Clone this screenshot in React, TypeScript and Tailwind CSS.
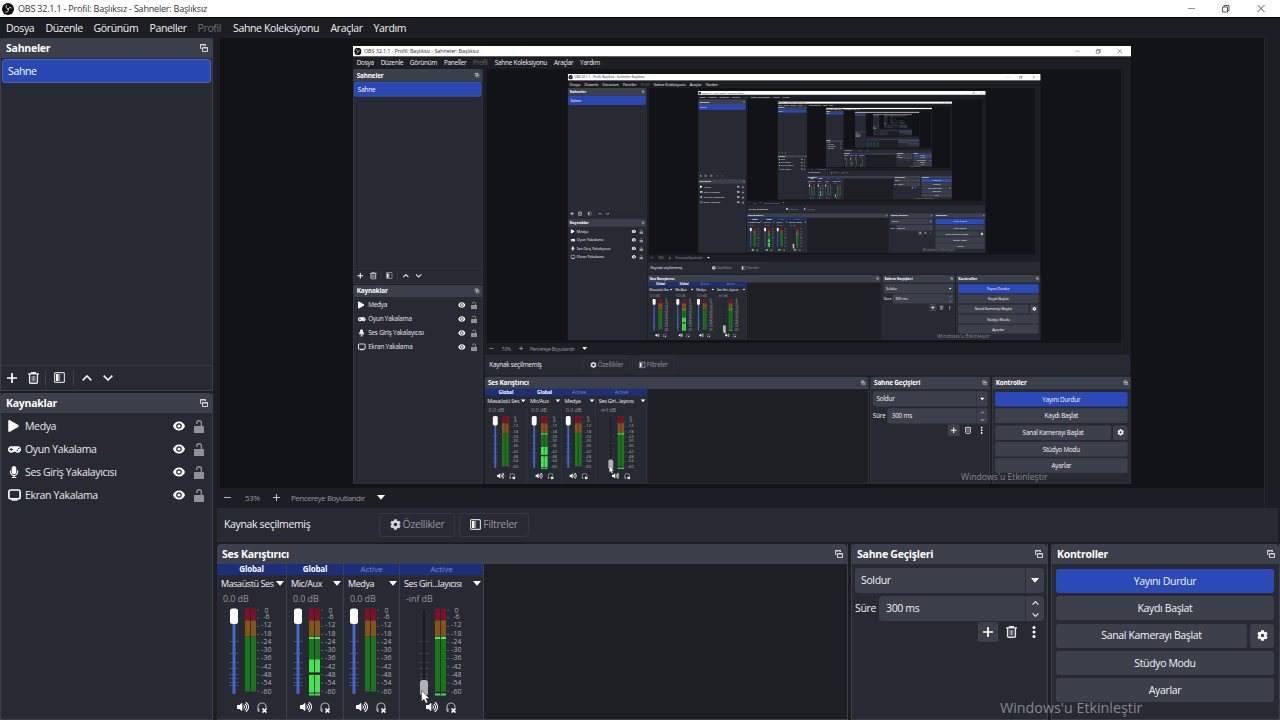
import React from 'react';
import { FaPlay, FaGamepad, FaMicrophone, FaCog, FaVolumeUp } from 'react-icons/fa';

const SCALE = 0.608;
const DETAILED_LEVELS = 5;
const MAX_DEPTH = 10;

const menuItems = [
  { label: 'Dosya', className: 'w-[39.5px]' },
  { label: 'Düzenle', className: 'w-12' },
  { label: 'Görünüm', className: 'w-14' },
  { label: 'Paneller', className: 'w-12' },
  { label: 'Profil', className: 'w-[35.5px] text-[#6b6e76]' },
  { label: 'Sahne Koleksiyonu', className: 'w-[97.5px]' },
  { label: 'Araçlar', className: 'w-[43px]' },
  { label: 'Yardım', className: 'w-10' },
];

const sources = [
  { name: 'Medya', icon: <FaPlay className="w-[11px] h-3" /> },
  { name: 'Oyun Yakalama', icon: <FaGamepad className="w-[13px] h-[11px]" /> },
  { name: 'Ses Giriş Yakalayıcısı', icon: <FaMicrophone className="w-3 h-3" /> },
  { name: 'Ekran Yakalama', icon: <ScreenIcon /> },
];

interface Channel {
  name: string;
  tag: string;
  db: string;
  width: string;
  faderPad: string;
  buttonPad: string;
  level?: 'live' | 'peak';
  muted?: boolean;
}

const channels: Channel[] = [
  { name: 'Masaüstü Ses', tag: 'Global', db: '0.0 dB', width: 'w-[70px]', faderPad: 'pl-[11px]', buttonPad: 'pl-5' },
  { name: 'Mic/Aux', tag: 'Global', db: '0.0 dB', width: 'w-[57px]', faderPad: 'pl-[5px]', buttonPad: 'pl-[13px]', level: 'live' },
  { name: 'Medya', tag: 'Active', db: '0.0 dB', width: 'w-14', faderPad: 'pl-1', buttonPad: 'pl-3' },
  { name: 'Ses Giri...layıcısı', tag: 'Active', db: '-inf dB', width: 'w-[84px]', faderPad: 'pl-[18px]', buttonPad: 'pl-[26px]', level: 'peak', muted: true },
];

const ticks = ['0', '-6', '-12', '-18', '-24', '-30', '-36', '-42', '-48', '-54', '-60'];

function ObsLogo() {
  return (
    <svg viewBox="0 0 24 24" className="w-3 h-3 shrink-0">
      <circle cx="12" cy="12" r="12" fill="#111" />
      <g fill="none" stroke="#ddd" strokeWidth="2">
        <path d="M9 4c-2 4 0 8 4 8" />
        <path d="M19 10c-4-2-7 0-7 4" />
        <path d="M7 18c4 1 7-2 5-6" />
      </g>
    </svg>
  );
}

function ScreenIcon() {
  return (
    <svg viewBox="0 0 13 12" className="w-[13px] h-3" fill="none" stroke="currentColor" strokeWidth="1.6">
      <rect x=".9" y="1" width="11.2" height="8.8" rx="1.8" />
      <path d="M3.5 11h6" strokeWidth="1.4" />
    </svg>
  );
}

function PopOutIcon() {
  return (
    <svg viewBox="0 0 8 8" className="w-2 h-2 shrink-0" fill="none" stroke="#d4d6dc">
      <path d="M1.5 4.5h-1v-4h5V2" />
      <path d="M.5 1h5" />
      <path d="M2.5 3.500h5v4h-5zM2.500 4h5" />
    </svg>
  );
}

function PlusIcon() {
  return (
    <svg viewBox="0 0 10 10" className="w-2.5 h-2.5" stroke="#fff" strokeWidth="1.7">
      <path d="M5 0v10M0 5h10" />
    </svg>
  );
}

function TrashIcon() {
  return (
    <svg viewBox="0 0 11 12" className="w-[11px] h-3" fill="none" stroke="#e6e7ea" strokeWidth="1.4">
      <path d="M0 1.9h11M3.6 1.4V.6h3.8v.8M1.6 2v8.2c0 .7.4 1.1 1.1 1.1h5.6c.7 0 1.1-.4 1.1-1.1V2" />
      <path d="M4.1 4v5.4M5.5 4v5.4M6.9 4v5.4" strokeWidth=".9" stroke="#b5b7bd" />
    </svg>
  );
}

function FilterIcon() {
  return (
    <svg viewBox="0 0 11 11" className="w-[11px] h-[11px] shrink-0" fill="none">
      <rect x=".6" y=".6" width="9.8" height="9.8" rx="1" stroke="#cfd1d6" strokeWidth="1.2" />
      <path d="M2 2h2.6v7H2z" fill="#fff" />
      <path d="M4.6 2h1.6v7H4.6z" fill="#8a8c93" />
    </svg>
  );
}

function Chevron({ up, className = 'w-2.5 h-1.5' }: { up?: boolean; className?: string }) {
  return (
    <svg viewBox="0 0 10 6" className={className} fill="none" stroke="#f0f1f3" strokeWidth="1.7">
      <path d={up ? 'M.7 5.3 5 1l4.3 4.3' : 'M.7.7 5 5 9.3.7'} />
    </svg>
  );
}

function Caret() {
  return (
    <svg viewBox="0 0 8 5" className="w-2 h-[5px] shrink-0" fill="#fff">
      <path d="M0 0h8L4 4.8z" />
    </svg>
  );
}

function EyeIcon() {
  return (
    <svg viewBox="0 0 12 10" className="w-3 h-2.5">
      <path d="M6 .4C3.2.4 1 2.2 0 5c1 2.8 3.2 4.6 6 4.6S11 7.8 12 5C11 2.2 8.8.4 6 .4z" fill="#fff" />
      <circle cx="6" cy="5" r="2.8" fill="#272a33" />
      <circle cx="6" cy="5" r="1.6" fill="#fff" />
    </svg>
  );
}

function LockIcon() {
  return (
    <svg viewBox="0 0 10 13" className="w-2.5 h-[13px]">
      <path d="M2.8 4V3a2.3 2.3 0 0 1 4.6 0v3.5" fill="none" stroke="#919193" strokeWidth="1.4" />
      <rect y="6" width="10" height="7" rx=".6" fill="#919193" />
    </svg>
  );
}

function MonitorOffIcon() {
  return (
    <svg viewBox="0 0 11 11" className="w-[11px] h-[11px]" fill="none">
      <path d="M1 9V5a4 4 0 0 1 8 0v1" stroke="#a9abb1" strokeWidth="1.2" />
      <path d="M1 6.5h1.5V10H1z" fill="#a9abb1" />
      <path d="m5.5 6.5 4 4m0-4-4 4" stroke="#fff" strokeWidth="1.7" />
    </svg>
  );
}

function DockHeader({ title }: { title: string }) {
  return (
    <div className="h-5 shrink-0 bg-[#3c404b] flex items-center justify-between pl-[5px] pr-1 rounded-t-sm">
      <span className="font-bold text-[10.5px] tracking-[-0.25px] text-white">{title}</span>
      <PopOutIcon />
    </div>
  );
}

function ScenesDock() {
  return (
    <section className="h-[353px] flex flex-col bg-[#272a33] border-x border-b border-[#3c404b]">
      <DockHeader title="Sahneler" />
      <div className="flex-1 pt-px px-px">
        <div className="h-6 bg-[#2a48b4] border border-[#4b61bd] rounded-[3px] flex items-center pl-[5px] text-white">Sahne</div>
      </div>
      <div className="h-[25px] pb-px shrink-0 border-t border-[#343741] flex items-center">
        <div className="w-[45px] h-4 flex items-center gap-[11px] pl-1.5 border-r border-[#3c404b]">
          <PlusIcon />
          <TrashIcon />
        </div>
        <div className="w-[28px] h-4 flex items-center justify-center border-r border-[#3c404b]">
          <FilterIcon />
        </div>
        <div className="flex items-center gap-[11px] pl-2">
          <Chevron up />
          <Chevron />
        </div>
      </div>
    </section>
  );
}

function SourcesDock() {
  return (
    <section className="flex-1 mt-0.5 flex flex-col bg-[#272a33] border-x border-b border-[#3c404b]">
      <DockHeader title="Kaynaklar" />
      <div className="pt-[1.5px]">
        {sources.map(source => (
          <div key={source.name} className="h-[23px] flex items-center pl-[7px] pr-2 text-[#e8e9ec]">
            <span className="w-[17px] flex items-center text-white">{source.icon}</span>
            <span className="flex-1">{source.name}</span>
            <EyeIcon />
            <span className="w-[9px]" />
            <LockIcon />
          </div>
        ))}
      </div>
    </section>
  );
}

function VolumeSlider({ muted }: { muted?: boolean }) {
  return (
    <svg viewBox="0 0 12 90" className="w-3 h-[90px] shrink-0">
      <g stroke={muted ? '#454850' : '#42507f'}>
        {[34, 46, 55, 61, 67, 71, 75, 78].map(y => (
          <path key={y} d={`M1.5 ${y}.5h9`} strokeDasharray={muted ? '3 3' : undefined} />
        ))}
      </g>
      <path d="M6 3v84" stroke={muted ? '#15171c' : '#4566cc'} strokeWidth={muted ? 1.5 : 3} />
      <rect x="2" y={muted ? 73 : 1.5} width="8" height="15.5" rx="2.5" fill={muted ? '#b0b0b3' : '#fff'} />
    </svg>
  );
}

function Meter({ level }: { level?: 'live' | 'peak' }) {
  return (
    <svg viewBox="0 0 14 90" className="w-3.5 h-[90px] shrink-0">
      <rect y="1.5" width="11" height="12" fill="#7d1128" />
      <rect y="13.5" width="11" height="16" fill="#85541a" />
      <rect y="29.5" width="11" height="55" fill="#1c7320" />
      {level && <rect y="30" width="11" height="2" fill="#52e45c" />}
      {level === 'live' && <rect y="52.5" width="11" height="33" fill="#42e550" />}
      {level === 'live' && <rect y="65.5" width="11" height="2.2" fill="#111" />}
      {level && <rect y="86.5" width="11" height="2" fill="#42df4f" />}
      <path d="M5.5 2v86" stroke="#20242b" strokeWidth=".8" />
      {ticks.map((t, i) => (
        <path key={t} d={`M12 ${3 + i * 8.1}h2`} stroke="#6f727a" strokeWidth=".8" />
      ))}
    </svg>
  );
}

function ChannelStrip({ channel }: { channel: Channel }) {
  const isGlobal = channel.tag === 'Global';
  return (
    <div className={`${channel.width} shrink-0 bg-[#272a33] border-r border-[#3c404b] flex flex-col tracking-normal`}>
      <div className={`h-[11px] pb-px flex items-center justify-center bg-[#1b2f7b] text-[8px] ${isGlobal ? 'font-bold tracking-[-0.2px] text-white' : 'text-[#7d8abf]'}`}>
        {channel.tag}
      </div>
      <div className="h-[18px] pb-px pl-1 pr-0.5 flex items-center justify-between whitespace-nowrap text-[9px] tracking-[-0.42px] text-[#f0f1f3]">
        <span>{channel.name}</span>
        <Caret />
      </div>
      <div className="h-3 pb-px pl-1.5 flex items-center text-[9px] tracking-[-0.1px] text-[#94969e]">{channel.db}</div>
      <div className={`h-[90px] flex mt-0.5 ${channel.faderPad}`}>
        <VolumeSlider muted={channel.muted} />
        <span className="w-[5px]" />
        <Meter level={channel.level} />
        <div className="w-[15px] flex flex-col items-center text-[7px] leading-[8.3px] text-[#a9abb1]">
          {ticks.map((t, i) => (
            <span key={t} className={i === 0 ? 'h-[6px] leading-[7px]' : 'h-[8.3px]'}>{t}</span>
          ))}
        </div>
      </div>
      <div className={`flex items-center gap-2 mt-1 ${channel.buttonPad}`}>
        <FaVolumeUp className="w-3 h-3 text-white" />
        <MonitorOffIcon />
      </div>
    </div>
  );
}

function MixerDock() {
  return (
    <section className="w-[631px] shrink-0 flex flex-col bg-[#1e1f24] border-r border-b border-[#3c404b]">
      <DockHeader title="Ses Karıştırıcı" />
      <div className="flex-1 flex">
        {channels.map(channel => (
          <ChannelStrip key={channel.name} channel={channel} />
        ))}
      </div>
    </section>
  );
}

function TransitionsDock() {
  return (
    <section className="w-[197px] shrink-0 flex flex-col bg-[#272a33] border-x border-b border-[#3c404b]">
      <DockHeader title="Sahne Geçişleri" />
      <div className="px-[3px] pt-1 flex flex-col gap-[3px]">
        <div className="h-[25px] bg-[#3c404b] rounded flex items-center text-[#f0f1f3]">
          <span className="flex-1 pl-1.5">Soldur</span>
          <span className="w-[19px] h-full border-l border-[#2c2f38] flex items-center justify-center"><Caret /></span>
        </div>
        <div className="h-[25px] flex items-center text-[#f0f1f3]">
          <span className="w-6 shrink-0">Süre</span>
          <div className="flex-1 h-full bg-[#3c404b] rounded flex items-center">
            <span className="flex-1 pl-[7px]">300 ms</span>
            <span className="w-[19px] h-full border-l border-[#2c2f38] flex flex-col items-center justify-center gap-2">
              <Chevron up className="w-[7px] h-1" />
              <Chevron className="w-[7px] h-1" />
            </span>
          </div>
        </div>
        <div className="flex items-center justify-end pr-2 -mt-0.5">
          <span className="w-5 h-5 bg-[#3c404b] rounded-[3px] flex items-center justify-center mr-2"><PlusIcon /></span>
          <TrashIcon />
          <svg viewBox="0 0 4 12" className="w-1 h-3 ml-[15px]" fill="#fff">
            <circle cx="2" cy="1.5" r="1.5" />
            <circle cx="2" cy="6" r="1.5" />
            <circle cx="2" cy="10.5" r="1.5" />
          </svg>
        </div>
      </div>
    </section>
  );
}

function ControlButton({ label, active }: { label: string; active?: boolean }) {
  return (
    <button className={`flex-1 h-6 rounded-[3px] text-[#f3f4f6] ${active ? 'bg-[#2c49b8]' : 'bg-[#3c404b]'}`}>
      {label}
    </button>
  );
}

function ControlsDock() {
  return (
    <section className="flex-1 flex flex-col bg-[#272a33] border-x border-b border-[#3c404b]">
      <DockHeader title="Kontroller" />
      <div className="pl-1 pr-[5px] pt-[5px] flex flex-col gap-[3.35px]">
        <div className="flex"><ControlButton label="Yayını Durdur" active /></div>
        <div className="flex"><ControlButton label="Kaydı Başlat" /></div>
        <div className="flex gap-[3px]">
          <ControlButton label="Sanal Kamerayı Başlat" />
          <button className="w-6 h-6 rounded-[3px] bg-[#3c404b] flex items-center justify-center">
            <FaCog className="w-[11px] h-[11px] text-white" />
          </button>
        </div>
        <div className="flex"><ControlButton label="Stüdyo Modu" /></div>
        <div className="flex"><ControlButton label="Ayarlar" /></div>
      </div>
    </section>
  );
}

function Preview({ depth }: { depth: number }) {
  return (
    <div className="h-[450px] shrink-0 flex bg-[#1d1e23]">
      <div className="w-[1045px] ml-[3px] border-r border-[#25272d] bg-[#121317] flex pl-[133px] pt-2">
        <div className="w-[778px] h-[438px] overflow-hidden">
          {depth < MAX_DEPTH && (
            <div className="w-[1280px] h-[720px] origin-top-left" style={{ transform: `scale(${SCALE})` }}>
              {depth < DETAILED_LEVELS ? <ObsWindow depth={depth + 1} /> : <OutlineWindow depth={depth + 1} />}
            </div>
          )}
        </div>
      </div>
    </div>
  );
}

// Far levels of the preview loop are too small for labels, only the panels remain
function OutlineWindow({ depth }: { depth: number }) {
  return (
    <div className="w-[1280px] h-[720px] overflow-hidden bg-[#1d1e23] flex flex-col">
      <div className="h-[26px] shrink-0 bg-[#d6d6d2]" />
      <div className="h-3 shrink-0" />
      <div className="flex-1 flex min-h-0">
        <div className="w-[213px] shrink-0 bg-[#272a33] flex flex-col">
          <div className="h-5 bg-[#3c404b]" />
          <div className="h-6 bg-[#2a48b4]" />
          <div className="h-[311px]" />
          <div className="h-5 bg-[#3c404b]" />
          <div className="flex flex-col gap-3 pt-2 pl-2">
            <div className="w-12 h-2.5 bg-[#a9abb1]" />
            <div className="w-24 h-2.5 bg-[#a9abb1]" />
            <div className="w-28 h-2.5 bg-[#a9abb1]" />
            <div className="w-24 h-2.5 bg-[#a9abb1]" />
          </div>
        </div>
        <div className="flex-1 min-w-0 pl-1 flex flex-col">
          <Preview depth={depth} />
          <div className="h-5 shrink-0" />
          <div className="h-[34px] shrink-0 bg-[#272a33]" />
          <div className="flex-1 flex gap-[3px] pt-0.5">
            <div className="w-[631px]">
              <div className="h-5 bg-[#3c404b]" />
              <div className="w-[267px] h-[155px] bg-[#272a33] border-t-[11px] border-[#1b2f7b] flex justify-around pt-9">
                {channels.map(channel => (
                  <div key={channel.name} className="w-3 h-[82px] bg-[#1c7320] border-t-[12px] border-[#7d1128]" />
                ))}
              </div>
            </div>
            <div className="w-[197px] bg-[#272a33]"><div className="h-20 bg-[#3c404b]" /></div>
            <div className="flex-1 bg-[#272a33] flex flex-col gap-1">
              <div className="h-5 bg-[#3c404b]" />
              <div className="h-6 bg-[#2c49b8]" />
              <div className="h-6 bg-[#3c404b]" />
              <div className="h-6 bg-[#3c404b]" />
              <div className="h-6 bg-[#3c404b]" />
            </div>
          </div>
        </div>
      </div>
    </div>
  );
}

function ObsWindow({ depth }: { depth: number }) {
  return (
    <div className="relative w-[1280px] h-[720px] overflow-hidden bg-[#1d1e23] flex flex-col text-[10.5px] tracking-[-0.35px] leading-none text-[#f0f1f3] font-['Open_Sans','Noto_Sans',sans-serif]">
      <header className="h-[18px] shrink-0 bg-white border-b border-black flex items-center pl-0.5 pr-[14px] text-[#333]">
        <ObsLogo />
        <span className="pl-1 flex-1 text-[9px] tracking-[-0.2px]">OBS 32.1.1 - Profil: Başlıksız - Sahneler: Başlıksız</span>
        <svg viewBox="0 0 80 10" className="w-20 h-2.5" fill="none" stroke="#444" strokeWidth=".9">
          <path d="M2 4.5h7" stroke="#888" />
          <path d="M36.5 3h5v5h-5zM38 3V1.5h5v5h-1.5" />
          <path d="m71.5 1 7 7m0-7-7 7" />
        </svg>
      </header>
      <nav className="h-5 shrink-0 flex items-center pl-1.5 whitespace-nowrap">
        {menuItems.map(item => (
          <span key={item.label} className={item.className}>{item.label}</span>
        ))}
      </nav>
      <div className="flex-1 flex min-h-0">
        <aside className="w-[213px] shrink-0 flex flex-col">
          <ScenesDock />
          <SourcesDock />
        </aside>
        <main className="flex-1 min-w-0 pl-1 flex flex-col">
          <Preview depth={depth} />
          <div className="h-5 shrink-0 w-[1048px] border-r border-[#25272d] flex items-center pl-[7px] pb-px text-[8px] text-[#94969e] whitespace-nowrap">
            <span className="w-[7px] h-px bg-[#b5b7bd]" />
            <span className="w-[42px] pl-3.5">53%</span>
            <svg viewBox="0 0 7 7" className="w-[7px] h-[7px]" stroke="#c8cad0"><path d="M3.5 0v7M0 3.5h7" /></svg>
            <span className="pl-[11px] w-[97px] tracking-[-0.5px]">Pencereye Boyutlandır</span>
            <Caret />
          </div>
          <div className="h-[34px] shrink-0 mr-0.5 bg-[#272a33] flex items-center pl-[7px] pb-px">
            <span className="w-[155px]">Kaynak seçilmemiş</span>
            <div className="w-[76px] h-6 border border-[#343741] rounded-[3px] flex items-center justify-center gap-0.5 text-[#94969e]">
              <FaCog className="w-[11px] h-[11px] text-[#d4d6dc]" />Özellikler
            </div>
            <div className="w-[70px] h-6 ml-1 border border-[#343741] rounded-[3px] flex items-center justify-center gap-0.5 text-[#94969e]">
              <FilterIcon />Filtreler
            </div>
          </div>
          <div className="flex-1 min-h-0 pt-0.5 flex gap-[3px]">
            <MixerDock />
            <TransitionsDock />
            <ControlsDock />
          </div>
        </main>
      </div>
      {/* Windows activation watermark */}
      <div className="absolute left-[1000px] top-[701px] text-[14.3px] tracking-normal text-[#85878c] whitespace-nowrap">Windows'u Etkinleştir</div>
      {/* Mouse pointer */}
      <svg viewBox="0 0 10 14" className="absolute left-[421px] top-[690px] w-2.5 h-3.5" fill="#fff" stroke="#222" strokeWidth=".5">
        <path d="M.5.5v11L3 9.3l1.8 4 2-.9L5 8.5h3.5z" />
      </svg>
    </div>
  );
}

export default function App() {
  return <ObsWindow depth={0} />;
}
